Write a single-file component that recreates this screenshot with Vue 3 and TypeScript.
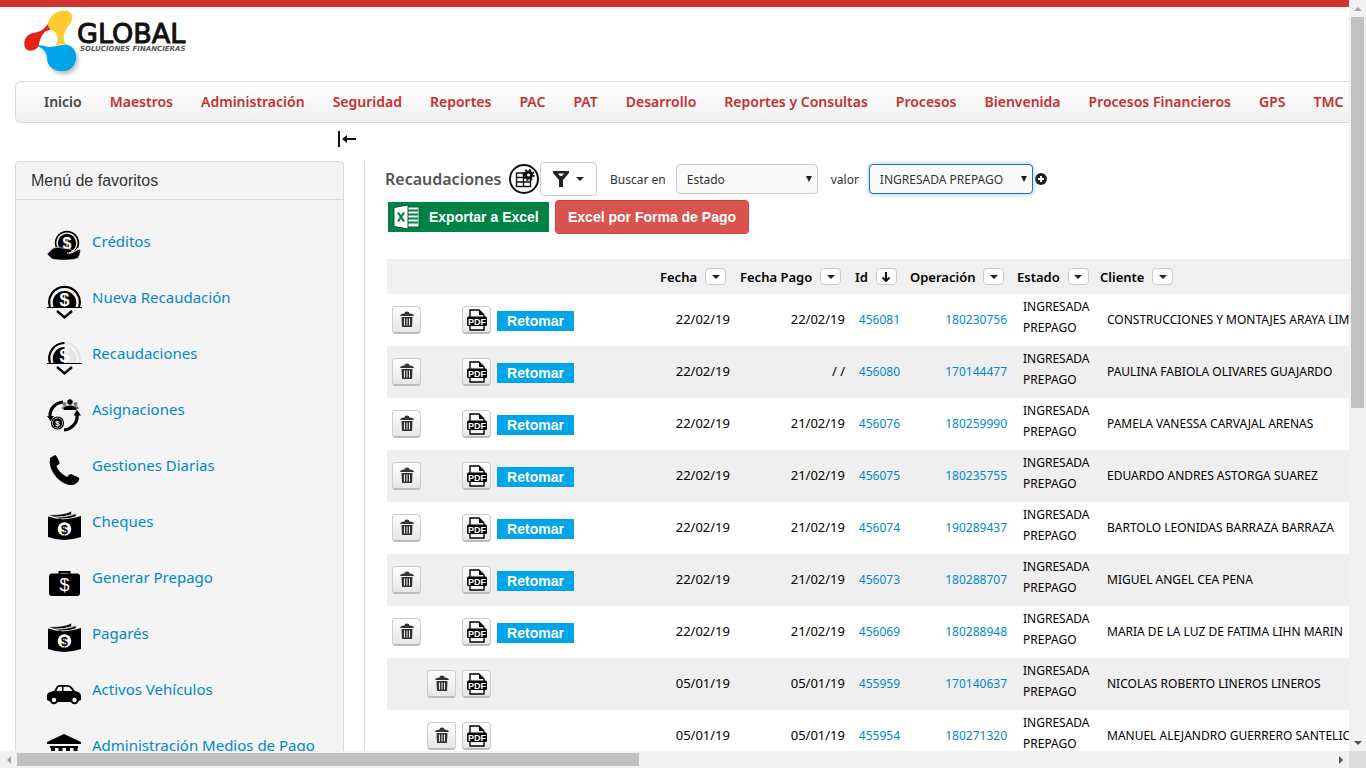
<script setup lang="ts">
import { ref } from 'vue'

interface Row {
  fecha: string
  pago: string
  id: string
  op: string
  cliente: string
  retomar: boolean
}

const nav: string[] = [
  'Inicio', 'Maestros', 'Administración', 'Seguridad', 'Reportes', 'PAC', 'PAT', 'Desarrollo',
  'Reportes y Consultas', 'Procesos', 'Bienvenida', 'Procesos Financieros', 'GPS', 'TMC',
]

const favorites: { icon: string; label: string }[] = [
  { icon: 'hand', label: 'Créditos' },
  { icon: 'coin', label: 'Nueva Recaudación' },
  { icon: 'half', label: 'Recaudaciones' },
  { icon: 'cycle', label: 'Asignaciones' },
  { icon: 'phone', label: 'Gestiones Diarias' },
  { icon: 'bills', label: 'Cheques' },
  { icon: 'case', label: 'Generar Prepago' },
  { icon: 'bills', label: 'Pagarés' },
  { icon: 'car', label: 'Activos Vehículos' },
  { icon: 'bank', label: 'Administración Medios de Pago' },
]

const columns: { label: string; sorted?: boolean }[] = [
  { label: 'Fecha' },
  { label: 'Fecha Pago' },
  { label: 'Id', sorted: true },
  { label: 'Operación' },
  { label: 'Estado' },
  { label: 'Cliente' },
]

const rows: Row[] = [
  { fecha: '22/02/19', pago: '22/02/19', id: '456081', op: '180230756', cliente: 'CONSTRUCCIONES Y MONTAJES ARAYA LIMITADA', retomar: true },
  { fecha: '22/02/19', pago: '/ /', id: '456080', op: '170144477', cliente: 'PAULINA FABIOLA OLIVARES GUAJARDO', retomar: true },
  { fecha: '22/02/19', pago: '21/02/19', id: '456076', op: '180259990', cliente: 'PAMELA VANESSA CARVAJAL ARENAS', retomar: true },
  { fecha: '22/02/19', pago: '21/02/19', id: '456075', op: '180235755', cliente: 'EDUARDO ANDRES ASTORGA SUAREZ', retomar: true },
  { fecha: '22/02/19', pago: '21/02/19', id: '456074', op: '190289437', cliente: 'BARTOLO LEONIDAS BARRAZA BARRAZA', retomar: true },
  { fecha: '22/02/19', pago: '21/02/19', id: '456073', op: '180288707', cliente: 'MIGUEL ANGEL CEA PENA', retomar: true },
  { fecha: '22/02/19', pago: '21/02/19', id: '456069', op: '180288948', cliente: 'MARIA DE LA LUZ DE FATIMA LIHN MARIN', retomar: true },
  { fecha: '05/01/19', pago: '05/01/19', id: '455959', op: '170140637', cliente: 'NICOLAS ROBERTO LINEROS LINEROS', retomar: false },
  { fecha: '05/01/19', pago: '05/01/19', id: '455954', op: '180271320', cliente: 'MANUEL ALEJANDRO GUERRERO SANTELICES', retomar: false },
]

const campo = ref('Estado')
const valor = ref('INGRESADA PREPAGO')
</script>

<template>
  <div class="window">
    <div class="view">
      <header class="top">
        <svg class="logo" viewBox="0 0 180 72" role="img" aria-label="Global Soluciones Financieras">
          <path class="red" d="M29 14C31 17 32 20 30 22C25 22 20 28 19 37C17 43 9 44 6 41C2 35 5 27 13 25C21 24 26 20 29 14Z" />
          <path class="yellow" d="M28 18C28 9 36 2 45 2.500C53 3 54 11 50 16C45 22 41 28 46 37C42 36 39 36 35 38C40 32 38 24 31 22Z" />
          <path class="blue" d="M17 38C20 36 24 39 30 39C37 39 42 36 48 37C54 39 57 45 56 52C54 60 48 64 40 63C31 62 27 56 27 50C27 43 22 40 17 38Z" />
          <text class="brand" x="57" y="35">GLOBAL</text>
          <text class="tagline" x="60" y="43">SOLUCIONES FINANCIERAS</text>
        </svg>
      </header>

      <nav class="nav">
        <a v-for="(item, i) in nav" :key="item" href="#" :class="{ active: i === 0 }">{{ item }}</a>
      </nav>

      <div class="collapse-row">
        <button type="button" class="plain" aria-label="Contraer menú">
          <svg width="20" height="18" viewBox="0 0 20 18"><path d="M2 1v16M6 9h13" stroke="#111" stroke-width="2" fill="none" /><path d="M5 9l5-4v8z" fill="#111" /></svg>
        </button>
      </div>

      <div class="body">
        <aside class="panel">
          <h2>Menú de favoritos</h2>
          <ul>
            <li v-for="f in favorites" :key="f.label">
              <a href="#">
                <svg class="fav" viewBox="0 0 36 36" aria-hidden="true">
                  <g v-if="f.icon === 'hand'">
                    <circle cx="21" cy="14" r="11.400" fill="none" stroke="#000" stroke-width="1.600" />
                    <circle cx="21" cy="14" r="9.200" />
                    <text class="inv" x="21" y="19.500" font-size="16">$</text>
                    <path d="M1 25L6 20C9 18 13 18 16 19L24 20C27 21 26 23 23 24C28 24 30 21 34 20C35 22 34 26 32 29C30 31 14 32 6 30Z" stroke="#f4f4f4" stroke-width=".6" />
                    <path d="M21 24C26 25 29 22 32 19" stroke="#f4f4f4" stroke-width="1" fill="none" />
                  </g>
                  <g v-else-if="f.icon === 'coin'">
                    <path d="M4 22A15.300 15.300 0 1 1 33 22" fill="none" stroke="#000" stroke-width="2.200" />
                    <path d="M7.500 22A11.800 11.800 0 1 1 29.500 22Z" />
                    <text class="inv" x="18.500" y="21" font-size="18">$</text>
                    <path d="M1 22.500H36" stroke="#000" stroke-width="1.200" />
                    <path d="M11 26l7.500 6.500L26 26" fill="none" stroke="#000" stroke-width="2.400" />
                  </g>
                  <g v-else-if="f.icon === 'half'">
                    <path d="M18.500 2A15.300 15.300 0 0 1 33 22" fill="none" stroke="#e2e2e2" stroke-width="2" />
                    <path d="M18.500 6A11.800 11.800 0 0 1 29.500 22H18.500Z" fill="#e6e6e6" />
                    <path d="M4 22A15.300 15.300 0 0 1 18.500 2" fill="none" stroke="#000" stroke-width="2.200" />
                    <path d="M7.500 22A11.800 11.800 0 0 1 18.500 6V22Z" />
                    <text class="inv" x="18.500" y="21" font-size="18">$</text>
                    <path d="M1 22.500H36" stroke="#000" stroke-width="1.200" />
                    <path d="M11 26l7.500 6.500L26 26" fill="none" stroke="#000" stroke-width="2.400" />
                  </g>
                  <g v-else-if="f.icon === 'cycle'">
                    <path d="M17 5A14 14 0 0 0 4 19M18 33A14 14 0 0 0 31 17" fill="none" stroke="#000" stroke-width="3.200" />
                    <path d="M1 19h7l-3.500 5zM27.500 18.500h7.500l-4-6z" />
                    <g fill="#777"><circle cx="18.500" cy="7" r="2" /><path d="M15.500 12q0-3 4-3v3zM33 12q0-3-4-3v3z" /><circle cx="29.500" cy="7" r="2" /></g>
                    <circle cx="24" cy="5" r="2.700" /><path d="M17.500 13q0-4 5-4.500h3q5 .500 5 4.500z" />
                    <circle cx="11.500" cy="26" r="6" fill="#f4f4f4" stroke="#000" stroke-width="1.200" /><circle cx="11.500" cy="26" r="4.800" />
                    <text class="inv" x="11.500" y="29" font-size="8">$</text>
                  </g>
                  <path v-else-if="f.icon === 'phone'" d="M4 5L9 2Q10 2 11 4L13.500 9Q14 11 10.500 13Q12 19 21 24Q23 21 25 21L32.500 24.500Q34 26 32 29L27.500 32Q19 33 11 25Q2 15 4 5Z" />
                  <g v-else-if="f.icon === 'bills'">
                    <path d="M2 7.500Q18 13 35 7V28Q18 34 2 28Z" />
                    <path d="M3 6Q18 6 25.500 2.200V5.500Q17 8.500 9 8M9 8.200Q23 8 30 4.500V7.500Q24 10 15 9.800" fill="#000" stroke="#f4f4f4" stroke-width=".6" />
                    <circle cx="18.500" cy="20" r="6.800" fill="#fff" />
                    <text x="18.500" y="24.500" font-size="12.500">$</text>
                  </g>
                  <g v-else-if="f.icon === 'case'">
                    <path d="M13.500 9V7H23.500V9" fill="none" stroke="#000" stroke-width="2" />
                    <rect x="3" y="8.500" width="31" height="22.500" rx="3" />
                    <text class="inv thin" x="18.500" y="26" font-size="18">$</text>
                  </g>
                  <g v-else-if="f.icon === 'car'">
                    <path d="M1 18Q1 15 8 14Q11 8 13 8H22Q25 8 29 14Q35 15 35 19V23L30 25H5L1 23Z" />
                    <path d="M10.500 14Q12 9.800 13.500 9.800H16V14ZM17.500 9.800H22Q24 10 26.500 14H17.500Z" fill="#f4f4f4" />
                    <circle cx="8" cy="23" r="4.200" /><circle cx="28.500" cy="23" r="4.200" />
                    <circle cx="8" cy="23" r="2.200" fill="#f4f4f4" /><circle cx="28.500" cy="23" r="2.200" fill="#f4f4f4" />
                  </g>
                  <g v-else>
                    <path d="M18 1L35 9V11H1V9ZM4 13H32V15H4ZM5 15h4v13H5zM12.500 15h4v13h-4zM20 15h4v13h-4zM27.500 15h4v13h-4zM2 29h32v3H2z" />
                  </g>
                </svg>
                <span>{{ f.label }}</span>
              </a>
            </li>
          </ul>
        </aside>

        <main class="content">
          <div class="toolbar">
            <h1>Recaudaciones</h1>
            <button type="button" class="plain" aria-label="Configurar columnas">
              <svg width="30" height="30" viewBox="0 0 30 30">
                <circle cx="15" cy="15" r="14" fill="#fff" stroke="#111" stroke-width="2" />
                <path d="M7.500 9H17M7.500 13.500H22M7.500 18H22M7.500 22.500H22M7.500 8.500V23M14.500 8.500V23M21.500 14V23" stroke="#111" stroke-width="1.400" fill="none" />
                <circle cx="19.500" cy="11" r="4.600" fill="#111" />
                <circle cx="19.500" cy="11" r="5.200" fill="none" stroke="#111" stroke-width="1.800" stroke-dasharray="2 2.080" />
                <circle cx="19.500" cy="11" r="1.500" fill="#fff" />
              </svg>
            </button>
            <button type="button" class="filter" aria-label="Filtrar">
              <svg width="16" height="16" viewBox="0 0 16 16"><path d="M0 0H16V2L10 9V16H6V9L0 2Z" fill="#222" /><path d="M5 2.500H11L9 5H7Z" fill="#fff" /></svg>
              <i class="caret"></i>
            </button>
            <label for="campo">Buscar en</label>
            <span class="pick field">
              <select id="campo" v-model="campo"><option>Estado</option></select>
            </span>
            <label for="valor">valor</label>
            <span class="pick value">
              <select id="valor" v-model="valor"><option>INGRESADA PREPAGO</option></select>
            </span>
            <button type="button" class="plain add" aria-label="Agregar filtro">
              <svg width="12" height="12" viewBox="0 0 12 12"><circle cx="6" cy="6" r="6" fill="#222" /><path d="M6 3v6M3 6h6" stroke="#fff" stroke-width="2" /></svg>
            </button>
          </div>

          <div class="exports">
            <button type="button" class="excel">
              <svg width="28" height="26" viewBox="0 0 28 26">
                <rect x="12" y="3" width="14" height="20" fill="#fff" stroke="#075c30" />
                <path d="M14 6.500H25M14 10.500H25M14 14.500H25M14 18.500H25" stroke="#008244" stroke-width="2" />
                <path d="M1 3.500L15 1V25L1 22.500Z" fill="#fff" stroke="#075c30" />
                <path d="M5 8.500l6 9M11 8.500l-6 9" stroke="#008244" stroke-width="2.200" />
              </svg>
              Exportar a Excel
            </button>
            <button type="button" class="danger">Excel por Forma de Pago</button>
          </div>

          <table>
            <colgroup>
              <col class="c-act" /><col class="c-act" /><col class="c-act" /><col class="c-ret" />
              <col class="c-fecha" /><col class="c-pago" /><col class="c-id" /><col class="c-op" /><col class="c-estado" /><col />
            </colgroup>
            <thead>
              <tr>
                <th colspan="4"></th>
                <th v-for="c in columns" :key="c.label" scope="col">
                  <div class="head">
                    {{ c.label }}
                    <button type="button" class="sort" :aria-label="'Ordenar ' + c.label">
                      <svg v-if="c.sorted" width="10" height="10" viewBox="0 0 10 10"><path d="M5 0V9M1.500 5.500L5 9L8.500 5.500" fill="none" stroke="#111" stroke-width="2" /></svg>
                      <i v-else class="caret"></i>
                    </button>
                  </div>
                </th>
              </tr>
            </thead>
            <tbody>
              <tr v-for="r in rows" :key="r.id">
                <td v-for="n in 3" :key="n" class="act">
                  <button v-if="(n === 1 && r.retomar) || (n === 2 && !r.retomar)" type="button" class="tool" aria-label="Eliminar">
                    <svg width="14" height="17" viewBox="0 0 14 17"><path d="M4.500 2.500Q4.500 .500 7 .500T9.500 2.500Q13.500 2.500 14 5H0Q.500 2.500 4.500 2.500Z" fill="#333" /><path d="M1.500 6H12.500L12 16H2Z" fill="#333" /><path d="M4.500 7.500V14.500M7 7.500V14.500M9.500 7.500V14.500" stroke="#eee" /></svg>
                  </button>
                  <button v-if="n === 3" type="button" class="tool" aria-label="PDF">
                    <svg width="20" height="22" viewBox="0 0 20 22"><path d="M3 1H12L17 6V21H3Z" fill="#f7f7f7" stroke="#000" stroke-width="1.400" /><path d="M12 1V6H17Z" /><rect x="0" y="7.500" width="20" height="9.500" rx="1.500" /><text class="inv" x="10" y="15.500" font-size="9">PDF</text></svg>
                  </button>
                </td>
                <td><button v-if="r.retomar" type="button" class="retomar">Retomar</button></td>
                <td class="num date">{{ r.fecha }}</td>
                <td class="num date">{{ r.pago }}</td>
                <td class="num"><a href="#">{{ r.id }}</a></td>
                <td class="num"><a href="#">{{ r.op }}</a></td>
                <td class="estado">INGRESADA PREPAGO</td>
                <td class="cliente">{{ r.cliente }}</td>
              </tr>
            </tbody>
          </table>
        </main>
      </div>
    </div>

    <div class="bar vertical">
      <button type="button" aria-label="Subir"><i class="arrow up"></i></button>
      <div class="track"><div class="thumb"></div></div>
      <button type="button" aria-label="Bajar"><i class="arrow down"></i></button>
    </div>
    <div class="bar horizontal">
      <button type="button" aria-label="Izquierda"><i class="arrow left"></i></button>
      <div class="track"><div class="thumb"></div></div>
      <button type="button" aria-label="Derecha"><i class="arrow right"></i></button>
    </div>
    <div class="corner"></div>
  </div>
</template>

<style>
html, body { overflow: hidden; background: #fff; }
</style>

<style scoped>
* { box-sizing: border-box; }
.window {
  display: grid;
  grid-template-columns: minmax(0, 1fr) 17px;
  grid-template-rows: minmax(0, 1fr) 17px;
  height: 100vh;
  font-family: "Trebuchet MS", "Noto Sans", sans-serif;
  font-size: 12px;
  color: #000;
}
.view { overflow: hidden; }
button { font-family: inherit; margin: 0; padding: 0; cursor: pointer; }
a { color: #0088cc; text-decoration: none; }
.plain { border: 0; background: none; display: flex; }

.top { border-top: 7px solid #d2322d; height: 81px; padding: 1px 20px; }
.logo { display: block; width: 180px; height: 72px; }
.red { fill: #e62117; }
.yellow { fill: #ffcb30; }
.blue { fill: #00a4e8; filter: drop-shadow(2px 3px 2px #bbb); }

.nav {
  display: flex;
  align-items: center;
  gap: 28px;
  height: 42px;
  margin-left: 15px;
  padding: 0 0 2px 28px;
  border: 1px solid #d9d9d9;
  border-right: 0;
  border-radius: 6px 0 0 6px;
  background: linear-gradient(#fff, #f0f0f0);
  white-space: nowrap;
  overflow: hidden;
}
.nav a { color: #c52f33; font-size: 14px; font-weight: 600; }
.nav a.active { color: #444; }

.collapse-row { display: flex; height: 38px; padding: 7px 0 0 337px; }
.collapse-row button { height: 18px; }

.body { display: flex; gap: 20px; padding-left: 15px; }
.panel {
  flex: none;
  width: 329px;
  border: 1px solid #d9d9d9;
  border-radius: 4px 4px 0 0;
  background: #f4f4f4;
}
.panel h2 {
  margin: 0;
  padding-left: 15px;
  border-bottom: 1px solid #d9d9d9;
  font: 16px/37px "Liberation Sans", Arial, sans-serif;
  color: #333;
}
.panel ul { list-style: none; margin: 0; padding: 14px 0 0 30px; }
.panel li { height: 56px; padding-top: 15px; }
.panel a { display: flex; gap: 10px; font-size: 15px; line-height: 24px; white-space: nowrap; }
.fav { flex: none; width: 36px; height: 36px; }
svg text { font-family: "Liberation Sans", Arial, sans-serif; font-weight: bold; text-anchor: middle; }
svg .inv { fill: #fff; }
svg text.thin { font-weight: normal; }
svg text.brand { text-anchor: start; font: 27px "DejaVu Sans", sans-serif; fill: #111; stroke: #111; stroke-width: 1px; }
svg text.tagline { text-anchor: start; font: italic bold 7px "DejaVu Sans", sans-serif; fill: #555; }

.content { flex: 1; min-width: 0; border-left: 1px solid #d9d9d9; padding-left: 20px; }
.toolbar { display: flex; align-items: center; height: 36px; color: #333; }
.toolbar h1 { margin: 0 4px 0 0; font-size: 16px; font-weight: 600; color: #555; width: 120px; white-space: nowrap; }
.filter {
  display: flex; align-items: center; justify-content: center; gap: 7px;
  width: 57px; height: 34px; margin-left: 1px;
  border: 1px solid #ccc; border-radius: 4px; background: #fff;
}
.caret { border: 4px solid transparent; border-top-color: #222; border-bottom: 0; }
.toolbar label { font-size: 12px; margin: 0 10px 0 13px; white-space: nowrap; }
.pick { position: relative; display: block; height: 30px; }
.field { width: 142px; }
.value { width: 164px; }
.pick::after {
  content: ""; position: absolute; right: 6px; top: 12px;
  border: 3px solid transparent; border-top: 6px solid #222; border-bottom: 0;
  pointer-events: none;
}
.pick select {
  appearance: none; width: 100%; height: 30px; padding: 0 10px;
  border: 1px solid #ccc; border-radius: 4px; background: #fafafa;
  font-family: inherit; font-size: 12px; color: #333;
}
.value select { border-color: #2a6fb5; box-shadow: 0 0 5px #8cc4f0; }
.add { margin-left: 2px; }

.exports { display: flex; align-items: center; gap: 6px; height: 34px; margin: 3px 0 25px 3px; }
.exports button { font: bold 14px "Liberation Sans", Arial, sans-serif; color: #fff; white-space: nowrap; }
.excel { display: flex; align-items: center; gap: 8px; width: 161px; height: 30px; padding-left: 5px; border: 0; background: #008244; }
.danger { width: 194px; height: 34px; border: 1px solid #d43f3a; border-radius: 4px; background: #d9534f; }

table { table-layout: fixed; border-collapse: collapse; width: 100%; margin-left: 2px; }
.c-act { width: 35px; }
.c-ret { width: 163px; }
.c-fecha { width: 80px; }
.c-pago { width: 115px; }
.c-id { width: 55px; }
.c-op { width: 107px; }
.c-estado { width: 83px; }
th { height: 35px; padding: 0 0 0 5px; background: #f0f0f0; font-size: 13px; font-weight: 600; text-align: left; }
.head { display: flex; align-items: center; gap: 8px; white-space: nowrap; }
.sort {
  display: flex; align-items: center; justify-content: center;
  width: 21px; height: 17px; border: 1px solid #ccc; border-radius: 4px; background: #fff;
}
td { height: 52px; padding: 0; line-height: 21px; }
tbody tr:nth-child(even) { background: #efefef; }
td.act { padding-left: 5px; }
.tool {
  display: flex; align-items: center; justify-content: center;
  width: 29px; height: 28px; border: 1px solid #ccc; border-bottom: 2px solid #bbb; border-radius: 4px;
  background: linear-gradient(#fff, #e6e6e6);
}
.retomar { display: block; width: 77px; height: 20px; margin: 2px 0 0 5px; border: 0; background: #00a4e8; color: #fff; font: bold 14px "Liberation Sans", Arial, sans-serif; }
td.num { padding: 0 5px 2px 0; text-align: right; white-space: nowrap; }
td.date { font-size: 13px; }
td.estado { padding: 2px 0 8px 11px; vertical-align: top; }
td.cliente { padding: 0 0 2px 12px; white-space: nowrap; overflow: hidden; }

.bar { display: flex; background: #f1f1f1; }
.bar button { display: flex; align-items: center; justify-content: center; flex: none; width: 17px; height: 17px; border: 0; background: none; }
.track { flex: 1; min-height: 0; }
.thumb { background: #c1c1c1; }
.vertical { flex-direction: column; }
.vertical .thumb { width: 13px; height: 54.5%; margin: 0 auto; }
.horizontal { align-items: center; }
.horizontal .thumb { height: 13px; width: 47.3%; }
.arrow { border: 4px solid transparent; }
.up { border-bottom-color: #a3a3a3; border-top: 0; }
.down { border-top-color: #505050; border-bottom: 0; }
.left { border-right-color: #a3a3a3; border-left: 0; }
.right { border-left-color: #505050; border-right: 0; }
.corner { background: #dcdcdc; }
</style>
